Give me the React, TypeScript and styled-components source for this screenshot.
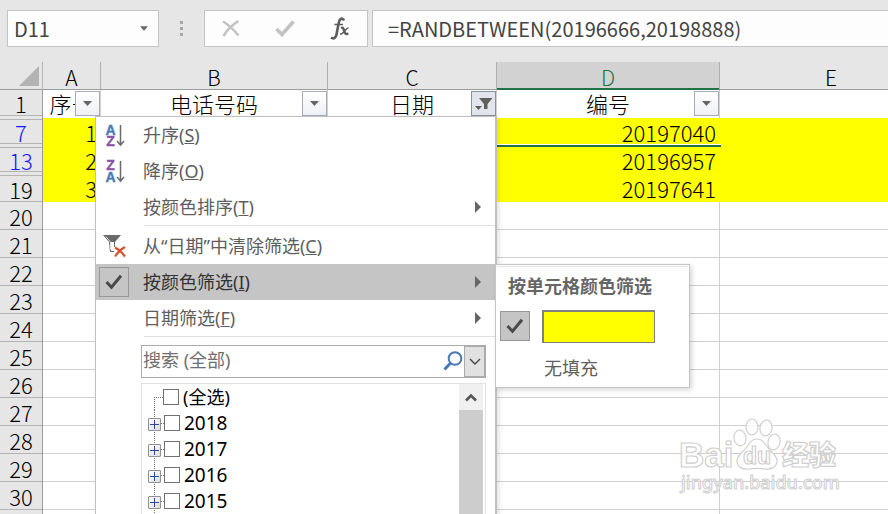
import React from "react";
import styled, { createGlobalStyle, css } from "styled-components";

const GlobalStyle = createGlobalStyle`
  * { box-sizing: border-box; }
  body { margin: 0; background: #fff; overflow: hidden; }
  button, input { font: inherit; color: inherit; margin: 0; padding: 0; border: 0; border-radius: 0; background: none; }
  svg { display: block; flex: none; }
`;

const UI_FONT = `"Noto Sans", "Noto Sans CJK SC", sans-serif`;
const SHEET_FONT = `"Noto Sans CJK SC", sans-serif`;

const Window = styled.main`
  display: flex;
  flex-direction: column;
  height: 100vh;
  overflow: hidden;
  font-family: ${UI_FONT};
  background: #fff;
`;

const FormulaBar = styled.header`
  display: flex;
  align-items: center;
  flex: none;
  height: 62px;
  padding: 0 0 5px 7px;
  background: #e6e6e6;
  color: #444;
  font-family: ${SHEET_FONT};
  font-size: 20px;
`;

const NameBox = styled.div`
  display: flex;
  align-items: center;
  width: 152px;
  height: 37px;
  padding: 0 10px 0 6px;
  border: 1px solid #c4c4c4;
  background: #fdfdfd;
`;

const BarInput = styled.input`
  flex: 1;
  min-width: 0;
  height: 35px;
  padding-bottom: 1px;
  outline: none;
`;

const IconButton = styled.button`
  display: flex;
  align-items: center;
  justify-content: center;
`;

const Grip = styled.div`
  display: flex;
  flex-direction: column;
  align-items: center;
  gap: 3px;
  width: 45px;
  i { width: 3px; height: 3px; background: #a6a6a6; }
`;

const FormulaTools = styled.div`
  display: flex;
  justify-content: space-around;
  width: 164px;
  height: 37px;
  margin-right: 4px;
  border: 1px solid #c4c4c4;
  background: #fdfdfd;
`;

const FormulaField = styled.div`
  display: flex;
  flex: 1;
  height: 37px;
  padding-left: 15px;
  border: 1px solid #c4c4c4;
  border-right: 0;
  background: #fdfdfd;
`;

const Sheet = styled.section`
  position: relative;
  flex: 1;
  min-height: 0;
  overflow: hidden;
`;

const Grid = styled.table`
  table-layout: fixed;
  width: 943px;
  min-width: 100%;
  border-collapse: separate;
  border-spacing: 0;
  font-family: ${SHEET_FONT};
  font-weight: 300;
  font-size: 22px;
  line-height: 25px;
  color: #000;
`;

const Col = styled.col<{ $w: number }>`
  width: ${(p) => p.$w}px;
`;

const Corner = styled.td`
  height: 28px;
  padding: 0 3px 3px 0;
  vertical-align: bottom;
  background: #e6e6e6;
  border-right: 1px solid #b8b8b8;
  border-bottom: 1px solid #9b9b9b;
  svg { margin-left: auto; }
`;

const ColumnHead = styled.th<{ $active?: boolean }>`
  height: 28px;
  padding: 3px 0 0;
  font-weight: 300;
  font-size: 21px;
  line-height: 24px;
  background: #e6e6e6;
  border-right: 1px solid #b0b0b0;
  border-bottom: 1px solid #9b9b9b;
  ${(p) => p.$active && css`
    color: #217346;
    background: #d2d2d2;
    border-bottom-color: #217346;
    box-shadow: inset 0 -1px #217346;
  `}
`;

const RowHead = styled.th<{ $filtered?: boolean; $gapAbove?: boolean; $gapBelow?: boolean }>`
  height: 28px;
  padding: ${(p) => (p.$gapAbove ? 1 : 0)}px 0 ${(p) => (p.$gapBelow ? 2 : 0)}px;
  font-weight: 300;
  background: #e6e6e6;
  border-right: 1px solid #9b9b9b;
  color: ${(p) => (p.$filtered ? "#1414ff" : "#000")};
  span {
    display: flex;
    align-items: center;
    justify-content: center;
    height: ${(p) => 28 - (p.$gapAbove ? 1 : 0) - (p.$gapBelow ? 2 : 0)}px;
    padding-top: 1px;
    border-top: ${(p) => (p.$gapAbove ? "1px solid #b4b4b4" : "0")};
    border-bottom: 1px solid #b4b4b4;
  }
`;

const Cell = styled.td<{ $fill?: boolean }>`
  position: relative;
  height: 28px;
  padding: 2px 3px 0 0;
  text-align: right;
  border-right: 1px solid #d0d0d0;
  border-bottom: 1px solid #d0d0d0;
  ${(p) => p.$fill && css`
    background: #ff0;
    border-color: #ff0;
  `}
`;

const HeadCell = styled.td`
  position: relative;
  height: 28px;
  padding: 0 0 1px;
  text-align: center;
  white-space: nowrap;
  border-right: 1px solid #d0d0d0;
`;

const FilterButton = styled.button<{ $on?: boolean }>`
  position: absolute;
  top: 1px;
  right: 0;
  display: flex;
  align-items: center;
  justify-content: center;
  width: 25px;
  height: 25px;
  border: 1px solid ${(p) => (p.$on ? "#8b90a0" : "#a6acb8")};
  background: ${(p) => (p.$on ? "#e2e5ec" : "linear-gradient(#fff, #eef0f5)")};
`;

const SelectionEdge = styled.i`
  position: absolute;
  z-index: 1;
  left: 0;
  right: -2px;
  bottom: -2px;
  height: 3px;
  border-top: 1px solid #fff;
  background: #217346;
`;

const Menu = styled.div`
  position: absolute;
  z-index: 2;
  top: 54px;
  left: 95px;
  width: 402px;
  height: 480px;
  background: #fff;
  border: 1px solid #c0c0c0;
  border-right: 2px solid #c0c0c0;
  box-shadow: 2px 2px 5px rgba(0, 0, 0, 0.12);
  font-size: 18px;
  color: #5e5e5e;
`;

const Item = styled.button<{ $active?: boolean }>`
  display: grid;
  grid-template-columns: 47px 1fr 20px;
  align-items: center;
  width: 100%;
  height: 36px;
  text-align: left;
  white-space: nowrap;
  line-height: 36px;
  ${(p) => p.$active && css`
    background: #c5c5c5;
    color: #333;
  `}
`;

const IconSlot = styled.span`
  display: flex;
  padding-left: 3px;
`;

const CheckBoxTile = styled.span`
  display: flex;
  align-items: center;
  justify-content: center;
  width: 30px;
  height: 30px;
  border: 1px solid #979797;
  background: #c5c5c5;
`;

const Separator = styled.hr`
  height: 3px;
  margin: 0 0 0 48px;
  border: 0;
  border-top: 1px solid #e1e1e1;
`;

const SearchBox = styled.div`
  display: flex;
  align-items: center;
  height: 33px;
  margin: 6px 9px 5px 45px;
  border: 1px solid #ababab;
  input {
    flex: 1;
    min-width: 0;
    height: 31px;
    padding: 0 0 3px 1px;
    outline: none;
  }
  input::placeholder { color: #6f6f6f; opacity: 1; }
`;

const SearchDrop = styled.button`
  display: flex;
  align-items: center;
  justify-content: center;
  width: 21px;
  height: 31px;
  margin-left: 1px;
  border: 1px solid #ababab;
  background: #e1e1e1;
`;

const TreeBox = styled.div`
  display: flex;
  height: 150px;
  margin: 0 9px 0 45px;
  border: 1px solid #e1e1e1;
`;

const Tree = styled.ul`
  flex: 1;
  margin: 0;
  padding: 0 0 0 6px;
  list-style: none;
  color: #000;
`;

const TreeRow = styled.li<{ $root?: boolean }>`
  display: flex;
  align-items: center;
  height: 26px;
  background: repeating-linear-gradient(#777 0 1px, #fff 1px 2px) 6px ${(p) => (p.$root ? "13px / 1px 13px" : "0 / 1px 100%")} no-repeat;
`;

const Branch = styled.span<{ $root?: boolean }>`
  width: ${(p) => (p.$root ? 9 : 3)}px;
  height: 1px;
  margin-left: ${(p) => (p.$root ? 6 : 0)}px;
  background: repeating-linear-gradient(90deg, #777 0 1px, #fff 1px 2px);
`;

const Expander = styled.button`
  display: flex;
  align-items: center;
  justify-content: center;
  width: 13px;
  height: 13px;
  margin-top: 3px;
  border: 1px solid #919191;
  border-radius: 1px;
  background: linear-gradient(135deg, #fff, #dcdcdc);
`;

const CheckLabel = styled.label<{ $digits?: boolean }>`
  display: flex;
  align-items: center;
  gap: 4px;
  font-size: ${(p) => (p.$digits ? 19 : 18)}px;
  line-height: 26px;
  input {
    appearance: none;
    width: 16px;
    height: 16px;
    margin-bottom: 1px;
    border: 1px solid #707070;
    background: #fff;
  }
`;

const ScrollTrack = styled.div`
  display: flex;
  flex-direction: column;
  width: 24px;
  margin-right: 2px;
  background: #cdcdcd;
`;

const ScrollUp = styled.button`
  display: flex;
  align-items: center;
  justify-content: center;
  height: 26px;
  background: #f0f0f0;
`;

const SubMenu = styled.div`
  position: absolute;
  z-index: 3;
  top: 202px;
  left: 495px;
  width: 195px;
  height: 124px;
  padding: 1px 1px 0;
  background: #fff;
  border: 1px solid #c6c6c6;
  box-shadow: 2px 2px 5px rgba(0, 0, 0, 0.16);
  font-size: 18px;
  color: #5e5e5e;
`;

const SubTitle = styled.h2`
  margin: 0;
  padding: 2px 0 0 11px;
  border-top: 1px solid #e2e2ea;
  font-size: 18px;
  font-weight: 700;
  line-height: 34px;
  color: #666;
`;

const ColorRow = styled.div`
  display: flex;
  align-items: center;
  gap: 12px;
  height: 46px;
  padding-left: 3px;
`;

const Swatch = styled.button`
  width: 113px;
  height: 33px;
  border: 1px solid #808080;
  border-left-width: 2px;
  border-top-width: 2px;
  background: #ff0;
`;

const NoFill = styled.button`
  display: block;
  padding-left: 47px;
  line-height: 38px;
`;

const Watermark = styled.svg`
  position: absolute;
  left: 676px;
  top: 354px;
`;

const Down = ({ size = 9 }: { size?: number }) => (
  <svg width={size} height="5" viewBox="0 0 9 5"><path d="M0 0h9L4.500 5z" fill="#666" /></svg>
);

const Right = () => (
  <svg width="6" height="12" viewBox="0 0 6 12"><path d="M0 0v12l6-6z" fill="#666" /></svg>
);

const Tick = () => (
  <svg width="18" height="16" viewBox="0 0 18 16">
    <path d="M1.500 8l5 5.200L16 1.800" fill="none" stroke="#4a4a4a" strokeWidth="3" />
  </svg>
);

const SortIcon = ({ down }: { down?: boolean }) => (
  <svg width="28" height="24" viewBox="0 0 28 24">
    <g fontFamily="Liberation Sans, sans-serif" fontWeight="700" fontSize="14" textAnchor="middle" strokeWidth="0.400">
      <text x="11.500" y={down ? 23 : 12} fill="#4a7ab5" stroke="#4a7ab5">A</text>
      <text x="11.500" y={down ? 11 : 23} fill="#8753a8" stroke="#8753a8">Z</text>
    </g>
    <path d="M21.500 2v20M18 18l3.500 4 3.500-4" fill="none" stroke="#6a6a6a" strokeWidth="1.500" />
  </svg>
);

const ClearIcon = () => (
  <svg width="28" height="24" viewBox="0 0 28 24">
    <path d="M4 1h18l-6 7v5h-1V8H12v9h3v1h-4L10 8z" fill="#6a6a6a" />
    <path d="M6.800 2.500L11.500 8v7.500" stroke="#ddd" fill="none" />
    <path d="M16 13.500c4 2 7 5 10 9M26 13c-4 2-7 5-10 9.500" fill="none" stroke="#d8512f" strokeWidth="2.200" />
  </svg>
);

const FunnelIcon = () => (
  <svg width="18" height="14" viewBox="0 0 18 14">
    <path d="M4 1h13.500l-5 6v5H9V7z" fill="#5f5f5f" />
    <path d="M0 9h7l-3.500 4z" fill="#5f5f5f" />
  </svg>
);

const PlusIcon = () => (
  <svg width="9" height="9" viewBox="0 0 9 9"><path d="M0 4.500h9M4.500 0v9" stroke="#2d4a95" /></svg>
);

type Entry = { text: string; key: string; icon?: React.ReactNode; sub?: boolean; active?: boolean };

const sortEntries: Entry[] = [
  { text: "升序", key: "S", icon: <SortIcon /> },
  { text: "降序", key: "O", icon: <SortIcon down /> },
  { text: "按颜色排序", key: "T", sub: true },
];
const filterEntries: Entry[] = [
  { text: "从“日期”中清除筛选", key: "C", icon: <ClearIcon /> },
  { text: "按颜色筛选", key: "I", sub: true, active: true, icon: <CheckBoxTile><Tick /></CheckBoxTile> },
  { text: "日期筛选", key: "F", sub: true },
];

const MenuEntry = ({ entry }: { entry: Entry }) => (
  <Item type="button" role="menuitem" $active={entry.active}>
    <IconSlot>{entry.icon}</IconSlot>
    <span>{entry.text}(<u>{entry.key}</u>)</span>
    {entry.sub ? <Right /> : null}
  </Item>
);

const columns = ["A", "B", "C", "D", "E"];
const titles = ["序号", "电话号码", "日期", "编号"];
const data = [
  { row: 7, a: 1, d: 20197040 },
  { row: 13, a: 2, d: 20196957 },
  { row: 19, a: 3, d: 20197641 },
];
const emptyRows = Array.from({ length: 11 }, (_, i) => 20 + i);
const years = ["2018", "2017", "2016", "2015"];

export default function App() {
  return (
    <Window>
      <GlobalStyle />
      <FormulaBar>
        <NameBox>
          <BarInput aria-label="名称框" defaultValue="D11" />
          <IconButton type="button" aria-label="展开"><Down size={8} /></IconButton>
        </NameBox>
        <Grip><i /><i /><i /></Grip>
        <FormulaTools>
          <IconButton type="button" aria-label="取消">
            <svg width="18" height="17" viewBox="0 0 18 17">
              <path d="M1 1.500C7 5 12 10 16.500 15.500M16.500 1C10 5 5 10 1.500 16" fill="none" stroke="#c3c3c3" strokeWidth="2.600" />
            </svg>
          </IconButton>
          <IconButton type="button" aria-label="输入">
            <svg width="20" height="17" viewBox="0 0 20 17">
              <path d="M1.500 9l5.500 5.500L18.500 1.500" fill="none" stroke="#c3c3c3" strokeWidth="3.600" />
            </svg>
          </IconButton>
          <IconButton type="button" aria-label="插入函数">
            <svg width="20" height="23" viewBox="0 0 20 23">
              <path d="M14 3.500C12.500 0 9.500 1.500 8.700 6L6.500 17.500C6 20.500 4 22.500 1 20.500" fill="none" stroke="#5c5c5c" strokeWidth="2.600" />
              <path d="M4.500 7.500h8.500" stroke="#5c5c5c" strokeWidth="1.500" />
              <path d="M11 11c2.500-1 2.500 1 3.300 3.200s1.200 4 4 2" fill="none" stroke="#5c5c5c" strokeWidth="2.400" />
              <path d="M18.500 11c-2.500-.500-5 6.500-8.500 6" fill="none" stroke="#5c5c5c" strokeWidth="1.500" />
            </svg>
          </IconButton>
        </FormulaTools>
        <FormulaField>
          <BarInput aria-label="编辑栏" defaultValue="=RANDBETWEEN(20196666,20198888)" />
        </FormulaField>
      </FormulaBar>

      <Sheet>
        <Grid>
          <colgroup>
            {[43, 58, 227, 169, 223, 223].map((w, i) => <Col key={i} $w={w} />)}
          </colgroup>
          <thead>
            <tr>
              <Corner><svg width="20" height="20" viewBox="0 0 20 20"><path d="M20 0v20H0z" fill="#b3b3b3" /></svg></Corner>
              {columns.map((c) => <ColumnHead key={c} scope="col" $active={c === "D"}>{c}</ColumnHead>)}
            </tr>
          </thead>
          <tbody>
            <tr>
              <RowHead scope="row" $gapBelow><span>1</span></RowHead>
              {titles.map((t) => (
                <HeadCell key={t}>
                  {t}
                  <FilterButton type="button" aria-label={`筛选${t}`} $on={t === "日期"}>
                    {t === "日期" ? <FunnelIcon /> : <Down />}
                  </FilterButton>
                </HeadCell>
              ))}
              <HeadCell />
            </tr>
            {data.map((r, i) => (
              <tr key={r.row}>
                <RowHead scope="row" $filtered={i < 2} $gapAbove $gapBelow={i < 2}><span>{r.row}</span></RowHead>
                <Cell $fill>{r.a}</Cell>
                <Cell $fill />
                <Cell $fill />
                <Cell $fill>{r.d}{i === 0 && <SelectionEdge />}</Cell>
                <Cell $fill />
              </tr>
            ))}
            {emptyRows.map((n) => (
              <tr key={n}>
                <RowHead scope="row"><span>{n}</span></RowHead>
                {columns.map((c) => <Cell key={c} />)}
              </tr>
            ))}
            <tr>
              <RowHead aria-hidden="true" />
              {columns.map((c) => <Cell key={c} />)}
            </tr>
          </tbody>
        </Grid>

        <Watermark width="170" height="84" viewBox="0 0 170 84" role="img" aria-label="Baidu">
          <g fill="#fff" fillOpacity="0.850" stroke="#d0d0d0" strokeWidth="1.200">
            <ellipse cx="76" cy="11" rx="6" ry="8" />
            <ellipse cx="90" cy="12" rx="6" ry="8" transform="rotate(10 90 12)" />
            <ellipse cx="64" cy="22" rx="6" ry="8" transform="rotate(-8 64 22)" />
            <ellipse cx="98" cy="26" rx="6" ry="8" transform="rotate(12 98 26)" />
            <path d="M81 23c6 0 8 5 11 9s9 7 9 13-6 9-12 8-10-1-16 0-12-2-12-8 6-9 9-13 5-9 11-9z" />
          </g>
          <g fontFamily="Liberation Sans, sans-serif" fontWeight="700" fill="#fff" fillOpacity="0.850" stroke="#cfcfcf" strokeWidth="1.200">
            <text x="3" y="51" fontSize="35">Bai</text>
            <text x="67" y="48" fontSize="23">du</text>
            <text x="106" y="49" fontSize="27" fontFamily="Noto Sans CJK SC, sans-serif" fontWeight="900">经验</text>
            <text x="5" y="73" fontSize="18" fontFamily="Noto Sans, sans-serif" fontWeight="500" strokeWidth="1">jingyan.baidu.com</text>
          </g>
        </Watermark>

        <Menu role="menu">
          {sortEntries.map((e) => <MenuEntry key={e.key} entry={e} />)}
          <Separator />
          {filterEntries.map((e) => <MenuEntry key={e.key} entry={e} />)}
          <Separator />
          <SearchBox>
            <input type="text" aria-label="搜索" placeholder="搜索 (全部)" />
            <IconButton type="button" aria-label="搜索">
              <svg width="20" height="22" viewBox="0 0 20 22">
                <circle cx="12" cy="7.500" r="6.300" fill="none" stroke="#4a7ab5" strokeWidth="2" />
                <path d="M7.500 12l-6 6.500" stroke="#4a7ab5" strokeWidth="3" />
              </svg>
            </IconButton>
            <SearchDrop type="button" aria-label="搜索范围">
              <svg width="12" height="8" viewBox="0 0 12 8"><path d="M1 1l5 5 5-5" fill="none" stroke="#444" strokeWidth="1.400" /></svg>
            </SearchDrop>
          </SearchBox>
          <TreeBox>
            <Tree>
              <TreeRow $root>
                <Branch $root />
                <CheckLabel><input type="checkbox" />(全选)</CheckLabel>
              </TreeRow>
              {years.map((y) => (
                <TreeRow key={y}>
                  <Expander type="button" aria-label={`展开${y}`}><PlusIcon /></Expander>
                  <Branch />
                  <CheckLabel $digits><input type="checkbox" />{y}</CheckLabel>
                </TreeRow>
              ))}
            </Tree>
            <ScrollTrack>
              <ScrollUp type="button" aria-label="向上滚动">
                <svg width="12" height="9" viewBox="0 0 12 9"><path d="M1 7.500l5-5 5 5" fill="none" stroke="#555" strokeWidth="2.600" /></svg>
              </ScrollUp>
            </ScrollTrack>
          </TreeBox>
        </Menu>

        <SubMenu role="menu">
          <SubTitle>按单元格颜色筛选</SubTitle>
          <ColorRow>
            <CheckBoxTile><Tick /></CheckBoxTile>
            <Swatch type="button" aria-label="黄色" />
          </ColorRow>
          <NoFill type="button">无填充</NoFill>
        </SubMenu>
      </Sheet>
    </Window>
  );
}
